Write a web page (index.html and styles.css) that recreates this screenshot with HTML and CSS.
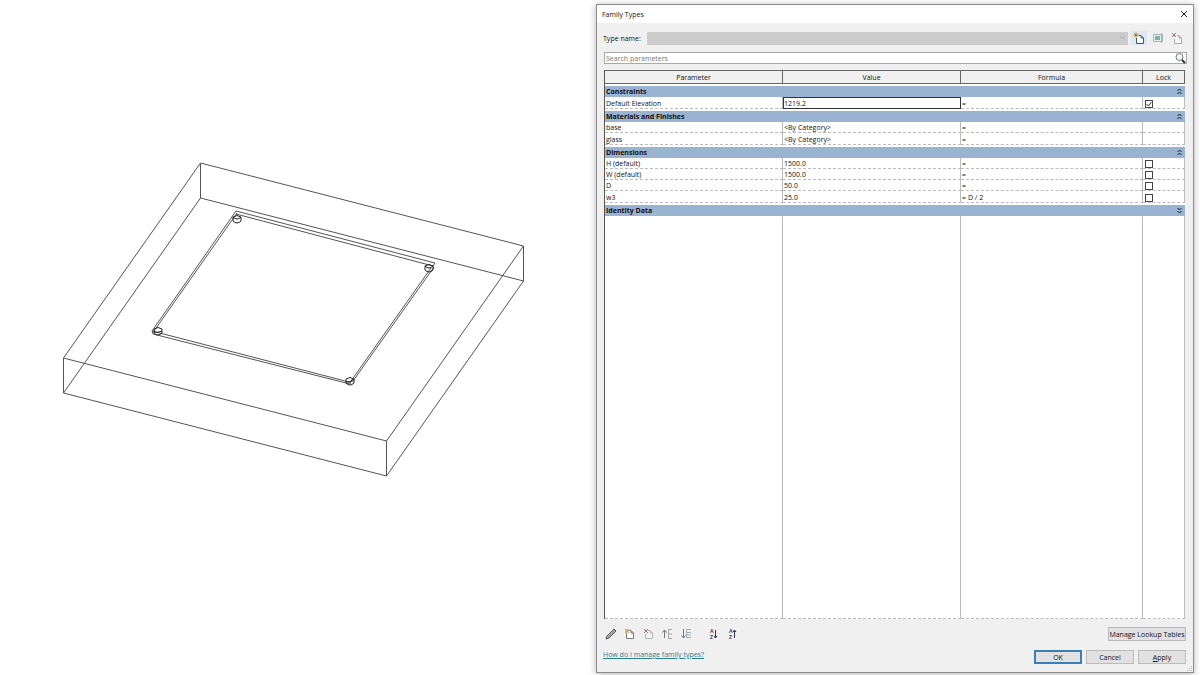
FILE: index.html
```
<!DOCTYPE html>
<html lang="en">
<head>
    <meta charset="UTF-8">
    <title>Family Types</title>
    <link rel="stylesheet" href="styles.css">
</head>
<body>
    <main class="viewer">
        <svg class="model" viewBox="0 0 592 675" role="img" aria-label="3D view of the family">
            <!-- base slab -->
            <path d="M200.5 163L523.5 246L386.5 441L63.5 358Z"/>
            <path d="M200.5 198L523.5 281L386.5 476L63.5 393Z"/>
            <path d="M200.5 163V198M523.5 246V281M386.5 441V476M63.5 358V393"/>
            <!-- glass panel -->
            <path d="M236 211L435 263L433 266L236 214M236 211L152 331L349 382L353 381L434 267"/>
            <path d="M237 213L154 331M152 331L153 334L350 384L351 381L431 268"/>
            <!-- standoffs -->
            <g class="pin">
                <path d="M233 217v4q4 4 8 0v-4q-4-3-8 0q4 4 8 0"/>
                <path d="M425 266v4q4 4 8 0v-4q-4-3-8 0q4 4 8 0"/>
                <path d="M154 329v4q4 4 8 0v-4q-4-3-8 0M154 332q4 1 8-1"/>
                <path d="M346 379v4q4 4 8 0v-4q-4-3-8 0M346 382q4 1 8-3"/>
            </g>
        </svg>
    </main>

    <section class="dialog" role="dialog" aria-labelledby="dialog-title">
        <header class="titlebar">
            <h1 id="dialog-title">Family Types</h1>
            <button class="icon-btn" type="button" aria-label="Close">
                <svg width="8" height="8" viewBox="0 0 8 8"><path d="M1 1L7 7M7 1L1 7" stroke="#222"/></svg>
            </button>
        </header>

        <div class="content">
            <div class="type-row">
                <label for="type-name">T<u>y</u>pe name:</label>
                <select id="type-name" disabled><option></option></select>
                <button class="icon-btn new-type" type="button" aria-label="New type">
                    <svg width="12" height="12" viewBox="0 0 12 12"><path d="M5.5 3.5H8L10.5 6V11.5H3.5V6" fill="#fff" stroke="#456"/><path d="M8 3.5V6H10.5" stroke="#456"/><path d="M3 0V6M0 3H6M1 1L5 5M5 1L1 5" stroke="#d9a75c"/><path d="M2 2h2v2H2z" fill="#8a6a30"/></svg>
                </button>
                <button class="icon-btn" type="button" aria-label="Rename type" disabled>
                    <svg width="12" height="12" viewBox="0 0 12 12"><path d="M1.5 2.5H10.5V9.5H1.5Z" fill="#e4eeec" stroke="#a8b6b8"/><path d="M3 4H8V8H3Z" fill="#7fb3aa"/><path d="M9.5 1V11" stroke="#a9b5b7"/></svg>
                </button>
                <button class="icon-btn" type="button" aria-label="Delete type" disabled>
                    <svg width="12" height="12" viewBox="0 0 12 12"><path d="M6 3.5H8L10.5 6V11.5H3.5V7" fill="#f5f5f5" stroke="#aaa"/><path d="M8 3.5V6H10.5" stroke="#aaa"/><path d="M1 1L5 5M5 1L1 5" stroke="#a46b74"/></svg>
                </button>
            </div>

            <div class="search">
                <input type="text" placeholder="Search parameters" aria-label="Search parameters">
                <button class="icon-btn" type="button" aria-label="Search">
                    <svg width="11" height="11" viewBox="0 0 11 11"><circle cx="4.5" cy="4" r="3.5" fill="#f4f7f8" stroke="#777"/><path d="M7 7L10 10" stroke="#333" stroke-width="2"/></svg>
                </button>
            </div>

            <div class="grid">
                <table>
                    <colgroup>
                        <col class="col-parameter">
                        <col class="col-value">
                        <col>
                        <col class="col-lock">
                    </colgroup>
                    <thead>
                        <tr><th>Parameter</th><th>Value</th><th>Formula</th><th>Lock</th></tr>
                    </thead>
                    <tbody>
                        <tr class="group"><th colspan="4"><div>Constraints <button class="icon-btn" type="button" aria-label="Collapse Constraints"><svg width="5" height="7" viewBox="0 0 5 7"><path d="M.5 3L2.5 1L4.5 3M.5 6L2.5 4L4.5 6" stroke="#123"/></svg></button></div></th></tr>
                        <tr class="last">
                            <td>Default Elevation</td>
                            <td class="active"><input type="text" value="1219.2" aria-label="Default Elevation"></td>
                            <td>=</td>
                            <td><input type="checkbox" aria-label="Lock Default Elevation" checked></td>
                        </tr>
                        <tr class="group"><th colspan="4"><div>Materials and Finishes <button class="icon-btn" type="button" aria-label="Collapse Materials and Finishes"><svg width="5" height="7" viewBox="0 0 5 7"><path d="M.5 3L2.5 1L4.5 3M.5 6L2.5 4L4.5 6" stroke="#123"/></svg></button></div></th></tr>
                        <tr><td>base</td><td>&lt;By Category&gt;</td><td>=</td><td></td></tr>
                        <tr class="last"><td>glass</td><td>&lt;By Category&gt;</td><td>=</td><td></td></tr>
                        <tr class="group"><th colspan="4"><div>Dimensions <button class="icon-btn" type="button" aria-label="Collapse Dimensions"><svg width="5" height="7" viewBox="0 0 5 7"><path d="M.5 3L2.5 1L4.5 3M.5 6L2.5 4L4.5 6" stroke="#123"/></svg></button></div></th></tr>
                        <tr><td>H (default)</td><td>1500.0</td><td>=</td><td><input type="checkbox" aria-label="Lock H"></td></tr>
                        <tr><td>W (default)</td><td>1500.0</td><td>=</td><td><input type="checkbox" aria-label="Lock W"></td></tr>
                        <tr><td>D</td><td>50.0</td><td>=</td><td><input type="checkbox" aria-label="Lock D"></td></tr>
                        <tr class="last"><td>w3</td><td>25.0</td><td>= D / 2</td><td><input type="checkbox" aria-label="Lock w3"></td></tr>
                        <tr class="group"><th colspan="4"><div>Identity Data <button class="icon-btn" type="button" aria-label="Expand Identity Data"><svg width="5" height="7" viewBox="0 0 5 7"><path d="M.5 1L2.5 3L4.5 1M.5 4L2.5 6L4.5 4" stroke="#123"/></svg></button></div></th></tr>
                        <tr class="filler"><td></td><td></td><td></td><td></td></tr>
                    </tbody>
                </table>
            </div>

            <div class="toolbar">
                <button class="icon-btn" type="button" aria-label="Edit parameter">
                    <svg width="12" height="12" viewBox="0 0 12 12"><path d="M1 11L2 8L9 1L11 3L4 10Z" fill="#bbb" stroke="#555"/><path d="M3 9L10 2" stroke="#888"/></svg>
                </button>
                <button class="icon-btn" type="button" aria-label="New parameter">
                    <svg width="12" height="12" viewBox="0 0 12 12"><path d="M5 2.5H7L9.500 5V10.500H2.500V5" fill="#fff" stroke="#777"/><path d="M7 2.5V5H9.500" stroke="#777"/><path d="M3 1V5M1 3H5M1 1L5 5M5 1L1 5" stroke="#d39a60"/></svg>
                </button>
                <button class="icon-btn" type="button" aria-label="Delete parameter" disabled>
                    <svg width="12" height="12" viewBox="0 0 12 12"><path d="M5 2.5H7L9.500 5V10.500H2.500V6" fill="#f5f5f5" stroke="#b5b5b5"/><path d="M7 2.5V5H9.500" stroke="#b5b5b5"/><path d="M1 1L5 5M5 1L1 5" stroke="#a46b74"/></svg>
                </button>
                <button class="icon-btn" type="button" aria-label="Move up" disabled>
                    <svg width="12" height="12" viewBox="0 0 12 12"><path d="M2.5 2V10M.5 4.5L2.5 2L4.5 4.5" stroke="#777"/><path d="M10 1.5H6.5V10.5H10M6.5 6H10" stroke="#a5a5a5"/></svg>
                </button>
                <button class="icon-btn" type="button" aria-label="Move down" disabled>
                    <svg width="12" height="12" viewBox="0 0 12 12"><path d="M2.5 1V10M.5 7.5L2.5 10L4.5 7.5" stroke="#777"/><path d="M10 1.5H5.5V9.5H10M5.5 4.5H10M5.5 7H10" stroke="#9fabb8"/></svg>
                </button>
                <button class="icon-btn sort" type="button" aria-label="Sort ascending">
                    <svg width="12" height="12" viewBox="0 0 12 12"><text x="2" y="5">A</text><text x="2" y="11">Z</text><path d="M7.5 2V10M6 8L7.5 10L9 8" stroke="#334"/></svg>
                </button>
                <button class="icon-btn" type="button" aria-label="Sort descending">
                    <svg width="12" height="12" viewBox="0 0 12 12"><text x="2" y="5">A</text><text x="2" y="11">Z</text><path d="M7.5 10V2M6 4L7.5 2L9 4" stroke="#334"/></svg>
                </button>
                <button class="btn lookup" type="button">Manage Lookup Tables</button>
            </div>

            <footer class="footer">
                <a href="#">How do I manage family types?</a>
                <button class="btn primary" type="button">OK</button>
                <button class="btn" type="button">Cancel</button>
                <button class="btn" type="button"><u>A</u>pply</button>
            </footer>
        </div>
        <svg class="grip" width="7" height="7" viewBox="0 0 7 7"><path d="M5 1h1v1H5zM3 3h1v1H3zM5 3h1v1H5zM1 5h1v1H1zM3 5h1v1H3zM5 5h1v1H5z" fill="#b5b5b5"/></svg>
    </section>
</body>
</html>
```

FILE: styles.css
```
* {
    box-sizing: border-box;
}

body {
    display: grid;
    grid-template-columns: 592fr 608fr;
    height: 100vh;
    margin: 0;
    background: #fff;
    font-family: "Open Sans", "Noto Sans", sans-serif;
    font-size: 7px;
    line-height: 9px;
    color: #111;
    overflow: hidden;
}

svg {
    display: block;
    fill: none;
}

button,
input,
select {
    font: inherit;
    color: inherit;
}

/* 3D view */
.viewer {
    min-width: 0;
    min-height: 0;
}

.model {
    width: 100%;
    height: 100%;
    stroke: #555;
}

.pin {
    stroke: #222;
}

/* dialog */
.dialog {
    position: relative;
    display: flex;
    flex-direction: column;
    margin: 4px 6px 2px 4px;
    border: 1px solid #8c8c8c;
    background: #f0f0f0;
    box-shadow: 0 1px 7px rgba(0, 0, 0, 0.3);
}

.titlebar {
    display: flex;
    align-items: center;
    justify-content: space-between;
    height: 18px;
    padding: 0 5px;
    background: #fff;
}

.titlebar h1 {
    margin: 0;
    font-size: 7px;
    font-weight: 400;
}

.content {
    flex: 1;
    display: flex;
    flex-direction: column;
    min-height: 0;
    padding: 8px 6px;
}

.icon-btn {
    display: flex;
    align-items: center;
    justify-content: center;
    padding: 0;
    border: 0;
    background: none;
}

.type-row {
    display: flex;
    align-items: center;
    height: 14px;
}

.type-row label {
    width: 44px;
}

.type-row select {
    flex: 1;
    height: 13px;
    margin-right: 3px;
    border: 0;
    appearance: none;
    opacity: 1;
    background: #ccc url("data:image/svg+xml,%3Csvg xmlns='http://www.w3.org/2000/svg' width='5' height='4' fill='none' stroke='%23aaa'%3E%3Cpath d='M0 0L2.5 3L5 0'/%3E%3C/svg%3E") no-repeat right 3px center;
}

.type-row .icon-btn {
    width: 16px;
    height: 14px;
    margin-right: 3px;
}

.type-row .icon-btn:last-child {
    margin-right: 2px;
}

.type-row .new-type {
    background: #dce8f2;
}

.search {
    display: flex;
    align-items: center;
    height: 12px;
    margin: 7px 0 0 1px;
    border: 1px solid #aaa;
    background: #fff;
}

.search input {
    flex: 1;
    height: 10px;
    padding: 0 1px;
    border: 0;
    outline: 0;
    background: none;
}

.search input::placeholder {
    color: #777;
}

/* parameter table */
.grid {
    flex: 1;
    min-height: 0;
    margin: 6px 2px 0 1px;
}

table {
    width: 100%;
    height: 100%;
    table-layout: fixed;
    border-collapse: separate;
    border-spacing: 0;
    border-left: 1px solid #555;
    background: #fff;
}

.col-parameter,
.col-value {
    width: 30.7%;
}

.col-lock {
    width: 42px;
}

th,
td {
    height: 11px;
    padding: 0 1px;
    text-align: left;
    white-space: nowrap;
}

thead th {
    height: 14px;
    border: solid #666;
    border-width: 1px 1px 1px 0;
    background: #f0f0f0;
    font-weight: 400;
    text-align: center;
}

td {
    padding-top: 1px;
    border-right: 1px solid #bbb;
    border-bottom: 1px dashed #bbb;
}

.last td {
    height: 12px;
}

.group th {
    height: 13px;
    padding: 2px 0 0;
    font-weight: 700;
}

.group div {
    display: flex;
    align-items: center;
    justify-content: space-between;
    height: 11px;
    padding: 0 3px 0 1px;
    background: #9ab3d0;
}

/* takes the free height, so the rows above keep theirs */
.filler,
.filler td {
    height: 100%;
}

.last td.active {
    padding: 0;
    border: 1px solid #333;
}

td.active input {
    display: block;
    width: 100%;
    height: 9px;
    padding: 0;
    border: 0;
    outline: 0;
}

input[type="checkbox"] {
    display: block;
    width: 8px;
    height: 8px;
    margin: 1px 1px 0;
    border: 1px solid #444;
    appearance: none;
    background: #fff;
}

input[type="checkbox"]:checked {
    background: #fff url("data:image/svg+xml,%3Csvg xmlns='http://www.w3.org/2000/svg' width='6' height='6' fill='none' stroke='%23333'%3E%3Cpath d='M.5 3L2.5 5L5.5 1'/%3E%3C/svg%3E") no-repeat center;
}

/* bottom controls */
.toolbar {
    display: flex;
    align-items: center;
    gap: 7px;
    height: 14px;
    margin-top: 8px;
    padding: 0 1px 0 2px;
}

.toolbar .sort {
    margin-left: 8px;
}

.toolbar text {
    fill: #334;
    font-family: "Liberation Sans", Arial, sans-serif;
    font-size: 5px;
    font-weight: 700;
}

.btn {
    width: 48px;
    height: 14px;
    padding: 0;
    border: 1px solid #bbb;
    background: #e1e1e1;
}

.btn.lookup {
    width: 78px;
    margin-left: auto;
}

.btn.primary {
    border: 2px solid #3a7fb5;
}

.footer {
    display: flex;
    align-items: center;
    gap: 4px;
    margin-top: 9px;
    padding-right: 1px;
}

.footer a {
    margin: 0 auto 5px 0;
    color: #2a7f96;
}

.grip {
    position: absolute;
    right: 0;
    bottom: 0;
}
```
